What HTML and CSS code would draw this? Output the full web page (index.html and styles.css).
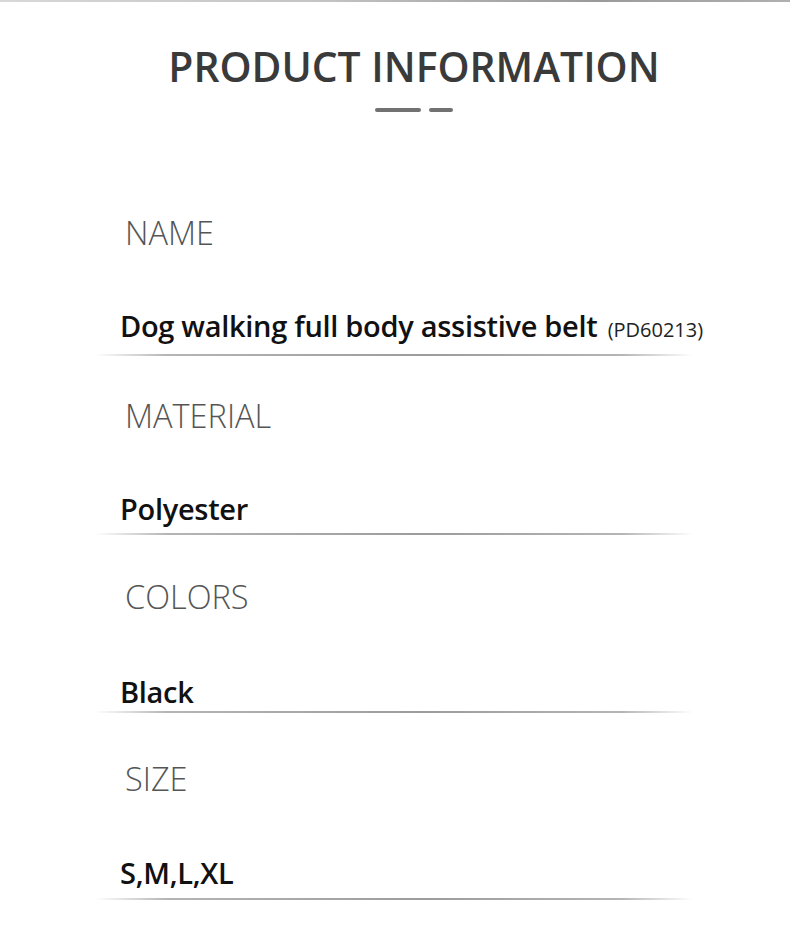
FILE: index.html
```html
<!DOCTYPE html>
<html>
<head>
<meta charset="utf-8">
<link rel="stylesheet" href="styles.css">
</head>
<body>
<div class="page">
  <div class="top-edge"></div>
  <header class="head">
    <h1 class="title">PRODUCT INFORMATION</h1>
    <div class="dashes"><span class="dash long"></span><span class="dash short"></span></div>
  </header>
  <section class="info">
    <div class="row">
      <div class="label">NAME</div>
      <div class="value">Dog walking full body assistive belt <span class="code">(PD60213)</span></div>
      <div class="rule"></div>
    </div>
    <div class="row">
      <div class="label">MATERIAL</div>
      <div class="value">Polyester</div>
      <div class="rule"></div>
    </div>
    <div class="row row-colors">
      <div class="label">COLORS</div>
      <div class="value">Black</div>
      <div class="rule"></div>
    </div>
    <div class="row row-size">
      <div class="label">SIZE</div>
      <div class="value">S,M,L,XL</div>
      <div class="rule"></div>
    </div>
  </section>
</div>
</body>
</html>
```
FILE: styles.css
```css
html, body {
  margin: 0;
  padding: 0;
  background: #ffffff;
}
.page {
  width: 790px;
  height: 940px;
  overflow: hidden;
  font-family: "Open Sans", "Noto Sans", sans-serif;
}
.top-edge {
  height: 2px;
  background: linear-gradient(90deg, #d8d8d8 0%, #c4c4c4 40%, #9a9a9a 75%, #b0b0b0 100%);
}
.head {
  display: flex;
  flex-direction: column;
  align-items: center;
  padding-top: 34px;
  padding-left: 38px;
}
.title {
  margin: 0;
  font-size: 40.8px;
  font-weight: 600;
  color: #3a3a3a;
  line-height: 60px;
}
.dashes {
  display: flex;
  gap: 8px;
  margin-top: 12px;
}
.dash {
  display: block;
  height: 4px;
  border-radius: 2px;
  background: #727272;
}
.dash.long { width: 46px; }
.dash.short { width: 24px; }

.info {
  display: flex;
  flex-direction: column;
  padding-top: 101px;
}
.row {
  display: flex;
  flex-direction: column;
}
.row + .row {
  margin-top: 39.5px;
}
.label {
  padding-left: 125px;
  font-size: 32.5px;
  font-weight: 300;
  color: #555555;
  line-height: 40px;
}
.value {
  padding-left: 120px;
  margin-top: 55px;
  font-size: 29px;
  font-weight: 600;
  color: #111111;
  line-height: 36px;
  letter-spacing: -0.3px;
}
.code {
  font-size: 20px;
  font-weight: 400;
  color: #222;
  letter-spacing: 0;
  margin-left: 3px;
}
.rule {
  margin: 6px 0 0 95px;
  width: 598px;
  height: 2px;
  background: linear-gradient(90deg, rgba(160,160,160,0) 0%, #b5b5b5 12%, #9c9c9c 55%, #b5b5b5 88%, rgba(160,160,160,0) 100%);
}

.row.row-colors { margin-top: 42.5px; }
.row-colors .value { margin-top: 57px; }
.row-colors .rule { margin-top: 1px; }

.row.row-size { margin-top: 45.5px; }
.row-size .value { margin-top: 56px; }
.row-size .rule { margin-top: 7px; }
```
